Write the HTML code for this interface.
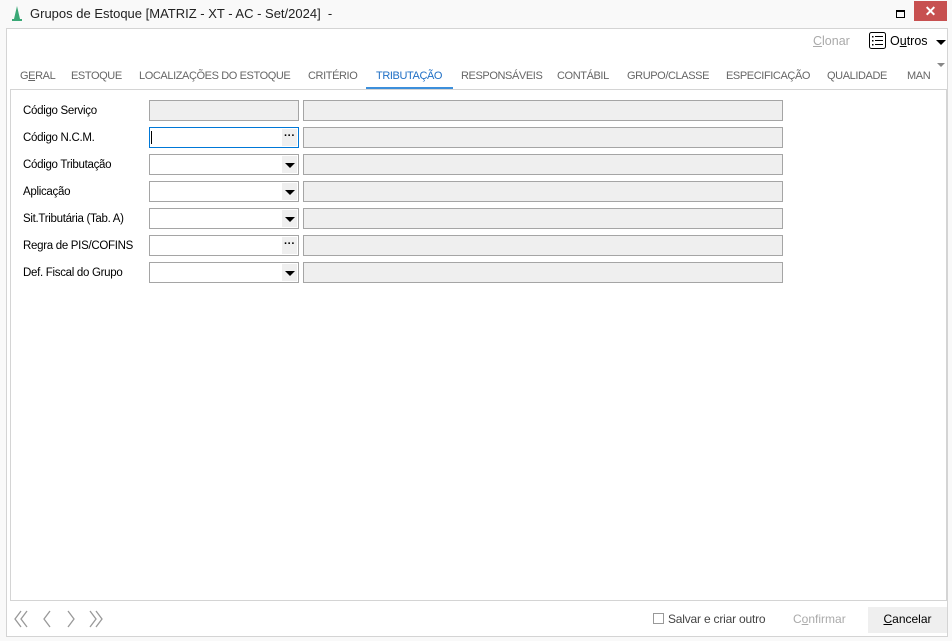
<!DOCTYPE html>
<html><head><meta charset="utf-8"><style>
*{box-sizing:border-box;margin:0;padding:0}
body{width:952px;height:641px;background:#f9f9f9;font-family:"Liberation Sans",sans-serif;font-size:12px;color:#000;position:relative;overflow:hidden}
.a{position:absolute}
.title{left:30px;top:6px;font-size:13px;color:#222}
.panel{left:6px;top:28px;width:942px;height:609px;background:#fff;border:1px solid #d4d4d4}
.content{left:10px;top:89px;width:937px;height:512px;border:1px solid #d4d4d4;background:#fff}
.tab{top:70px;font-size:11px;letter-spacing:-0.4px;color:#666}
.lbl{left:23px;font-size:11.5px;letter-spacing:-0.3px;margin-top:2px}
.in{left:149px;width:150px;height:21px;border:1px solid #a5a5a5;background:#fff}
.in.g{background:#efefef}
.r{left:303px;width:480px;height:21px;border:1px solid #a5a5a5;background:#efefef}
.btn{position:absolute;right:1px;top:1px;width:15px;height:17px;background:#efefef;font-size:11px;text-align:center;line-height:15px;font-weight:bold}
.arr{position:absolute;right:4px;top:7px;width:0;height:0;border-left:5px solid transparent;border-right:5px solid transparent;border-top:5px solid #000}
</style></head><body>
<svg class="a" style="left:10px;top:6px" width="14" height="15"><polygon points="7,0 10,13 4,13" fill="#3aa876"/><rect x="2" y="13" width="10" height="2" fill="#3aa876"/></svg>
<div class="a title">Grupos de Estoque [MATRIZ - XT - AC - Set/2024]&nbsp; -</div>
<div class="a" style="left:896px;top:10px;width:9px;height:8px;border:1px solid #000;border-top-width:2px"></div>
<div class="a" style="left:914px;top:1px;width:33px;height:20px;background:#c75050;color:#fff;text-align:center;font-size:14px;line-height:20px;font-weight:bold">✕</div>
<div class="a panel"></div>
<div class="a" style="left:813px;top:34px;color:#aaa;font-size:12.5px"><u>C</u>lonar</div>
<svg class="a" style="left:869px;top:32px" width="17" height="17"><rect x="0.5" y="0.5" width="16" height="16" rx="2" fill="none" stroke="#000"/><g fill="#000"><rect x="3" y="4" width="1.5" height="1.5"/><rect x="3" y="8" width="1.5" height="1.5"/><rect x="3" y="12" width="1.5" height="1.5"/><rect x="6" y="4" width="8" height="1"/><rect x="6" y="8" width="8" height="1"/><rect x="6" y="12" width="8" height="1"/></g></svg>
<div class="a" style="left:890px;top:34px;font-size:12.5px">O<u>u</u>tros</div>
<div class="a" style="left:936px;top:40px;width:0;height:0;border-left:5px solid transparent;border-right:5px solid transparent;border-top:5px solid #000"></div>
<div class="a tab" style="left:20px">G<u>E</u>RAL</div>
<div class="a tab" style="left:71px">ESTOQUE</div>
<div class="a tab" style="left:139px">LOCALIZAÇÕES DO ESTOQUE</div>
<div class="a tab" style="left:308px">CRITÉRIO</div>
<div class="a tab" style="left:376px;color:#1f6fc5">TRIBUTAÇÃO</div>
<div class="a tab" style="left:461px">RESPONSÁVEIS</div>
<div class="a tab" style="left:557px">CONTÁBIL</div>
<div class="a tab" style="left:627px">GRUPO/CLASSE</div>
<div class="a tab" style="left:726px">ESPECIFICAÇÃO</div>
<div class="a tab" style="left:827px">QUALIDADE</div>
<div class="a tab" style="left:907px">MAN</div>
<div class="a" style="left:937px;top:63px;width:0;height:0;border-left:4px solid transparent;border-right:4px solid transparent;border-top:4px solid #888"></div>
<div class="a content"></div>
<div class="a" style="left:366px;top:87px;width:87px;height:2px;background:#3c8fdb"></div>

<div class="a lbl" style="top:103px">Código Serviço</div>
<div class="a in g" style="top:100px"></div><div class="a r" style="top:100px"></div>
<div class="a lbl" style="top:130px">Código N.C.M.</div>
<div class="a in" style="top:127px;border-color:#0078d7"><div class="a" style="left:1px;top:3px;width:1px;height:13px;background:#000"></div><div class="btn">···</div></div><div class="a r" style="top:127px"></div>
<div class="a lbl" style="top:157px">Código Tributação</div>
<div class="a in" style="top:154px"><div class="btn"><div class="arr" style="right:2px"></div></div></div><div class="a r" style="top:154px"></div>
<div class="a lbl" style="top:184px">Aplicação</div>
<div class="a in" style="top:181px"><div class="btn"><div class="arr" style="right:2px"></div></div></div><div class="a r" style="top:181px"></div>
<div class="a lbl" style="top:211px">Sit.Tributária (Tab. A)</div>
<div class="a in" style="top:208px"><div class="btn"><div class="arr" style="right:2px"></div></div></div><div class="a r" style="top:208px"></div>
<div class="a lbl" style="top:238px">Regra de PIS/COFINS</div>
<div class="a in" style="top:235px"><div class="btn">···</div></div><div class="a r" style="top:235px"></div>
<div class="a lbl" style="top:265px">Def. Fiscal do Grupo</div>
<div class="a in" style="top:262px"><div class="btn"><div class="arr" style="right:2px"></div></div></div><div class="a r" style="top:262px"></div>

<svg class="a" style="left:12px;top:609px" width="96" height="20" fill="none" stroke="#999" stroke-width="1.3"><path d="M9 2 L3 10 L9 18 M15 2 L9 10 L15 18"/><path d="M38 2 L32 10 L38 18"/><path d="M56 2 L62 10 L56 18"/><path d="M78 2 L84 10 L78 18 M84 2 L90 10 L84 18"/></svg>
<div class="a" style="left:653px;top:613px;width:11px;height:11px;border:1px solid #999;background:#fff"></div>
<div class="a" style="left:668px;top:612px;color:#444;letter-spacing:-0.2px">Salvar e criar outro</div>
<div class="a" style="left:793px;top:612px;color:#aaa">C<u>o</u>nfirmar</div>
<div class="a" style="left:868px;top:607px;width:79px;height:26px;background:#efefef;text-align:center;line-height:25px"><u>C</u>ancelar</div>
</body></html>
